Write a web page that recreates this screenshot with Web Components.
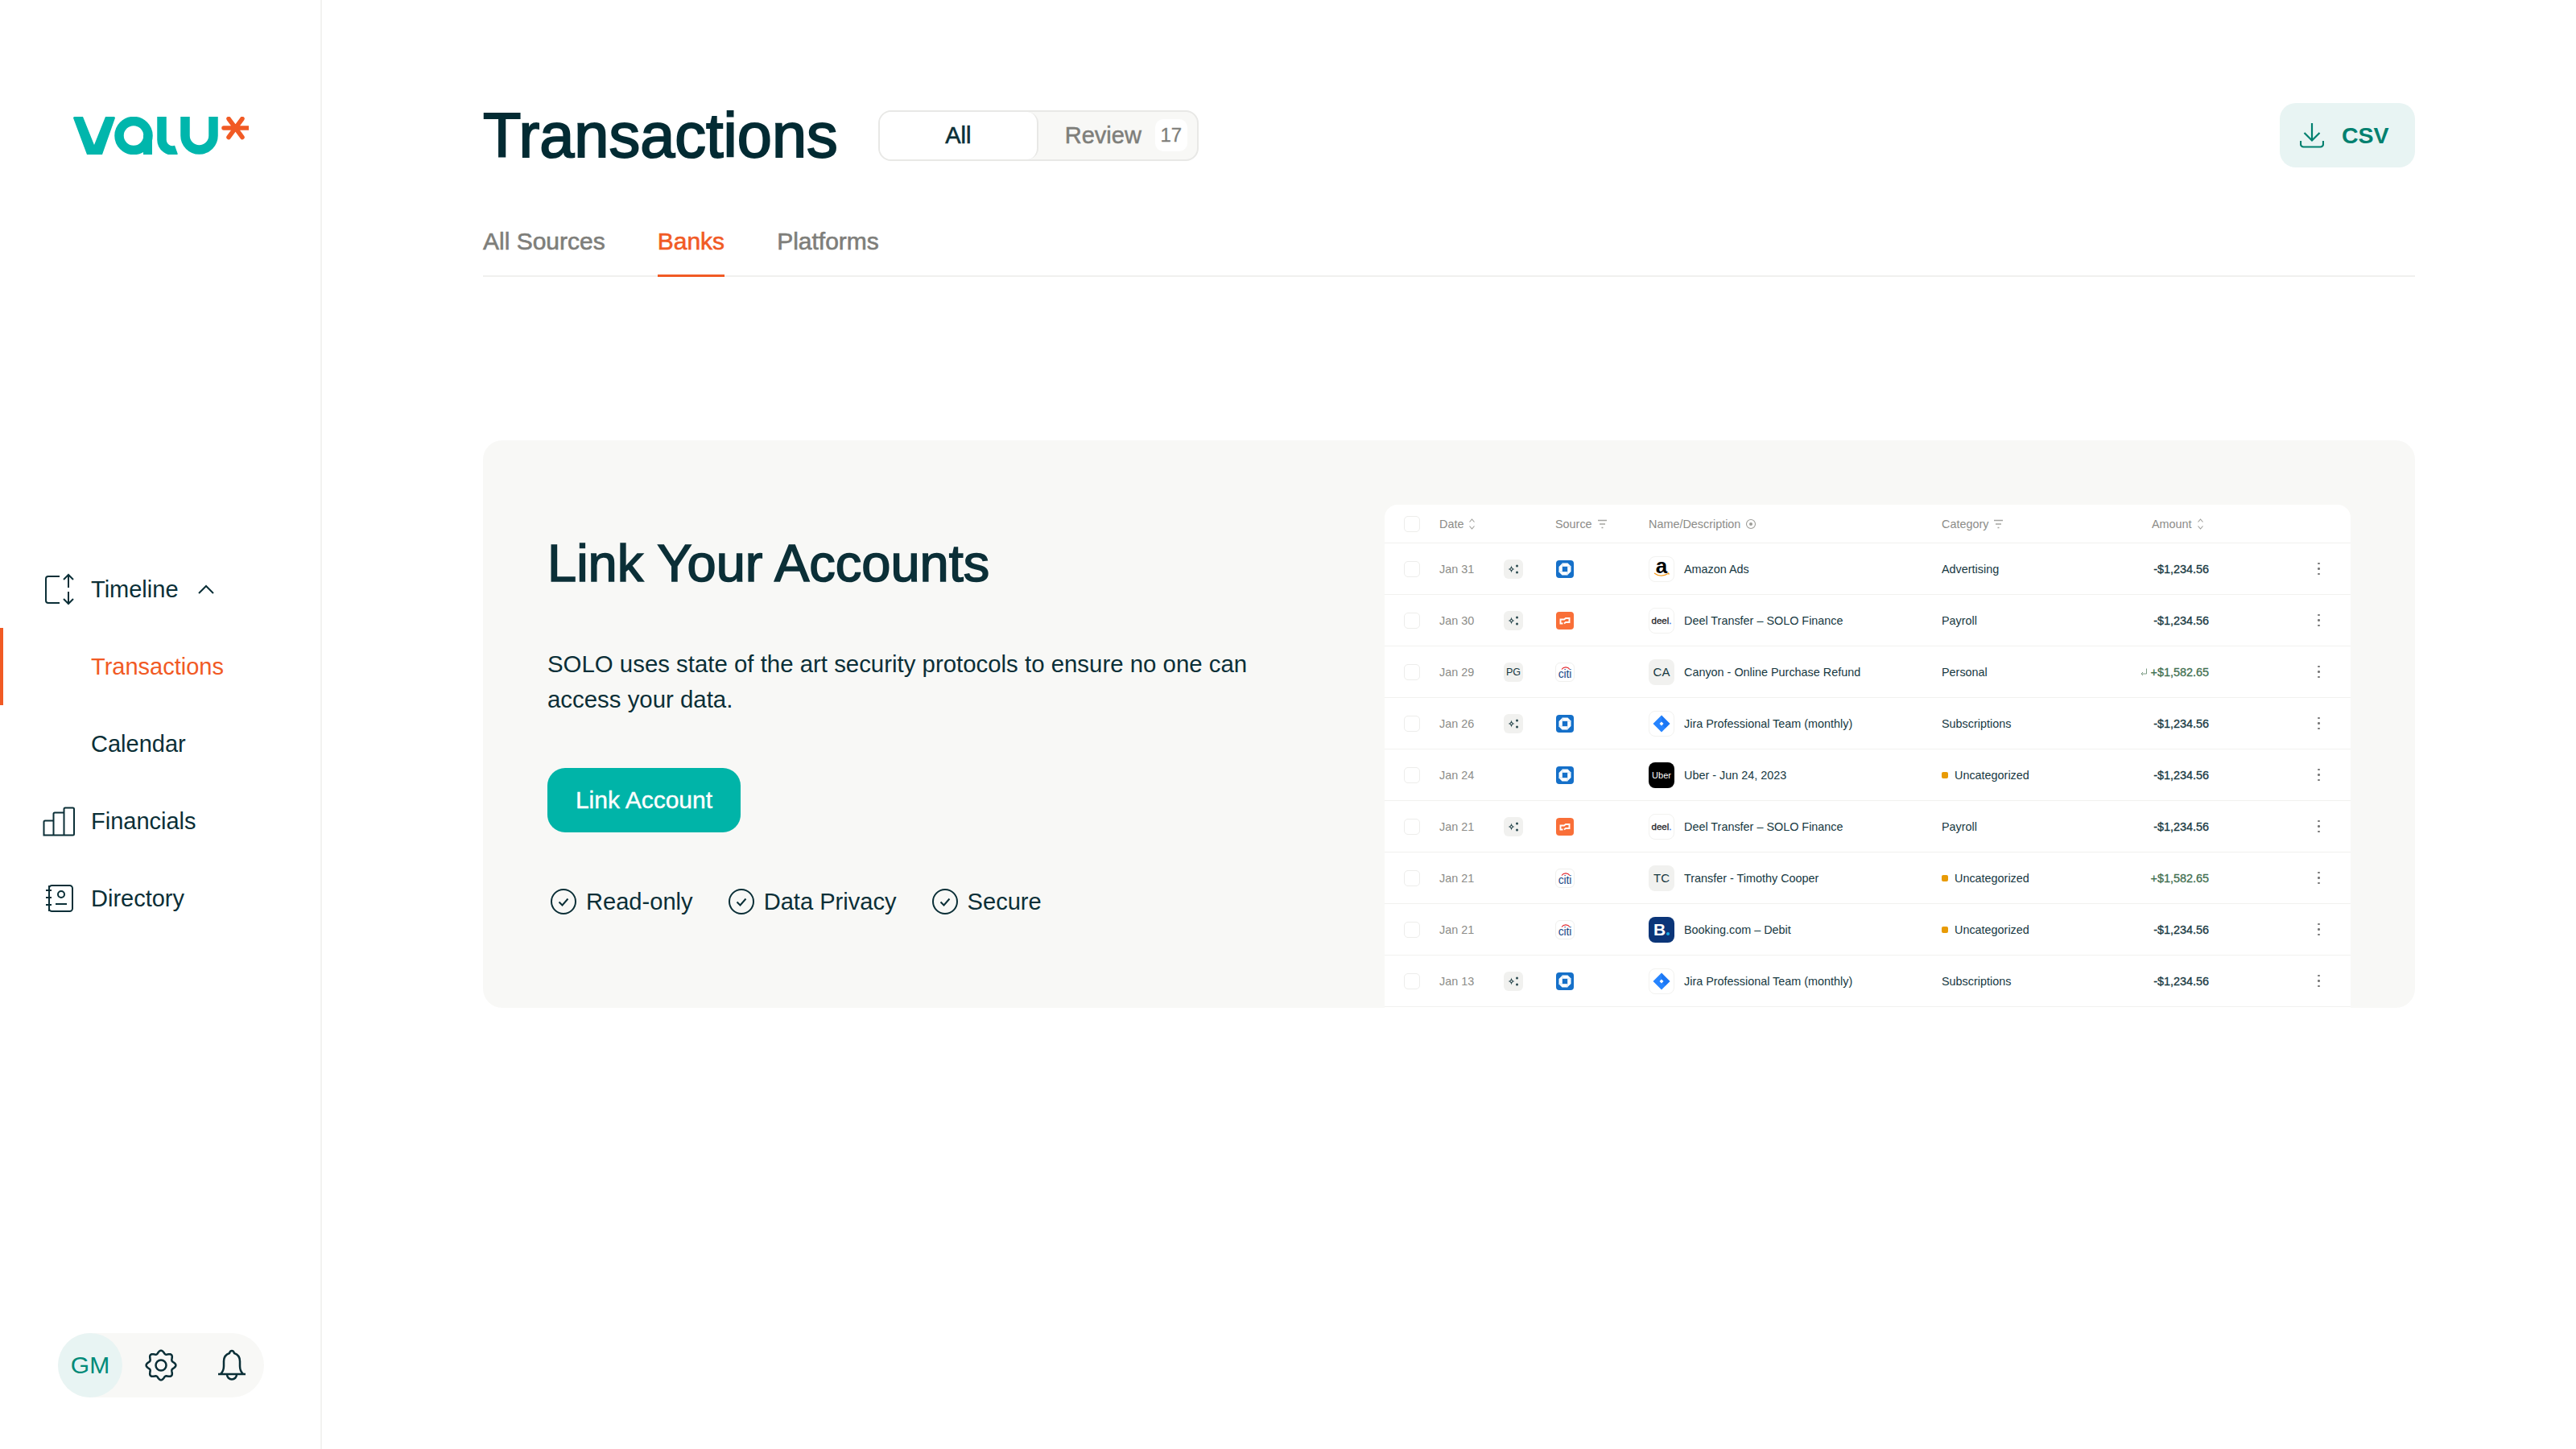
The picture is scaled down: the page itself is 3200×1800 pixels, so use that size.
<!DOCTYPE html>
<html lang="en">
<head>
<meta charset="utf-8">
<title>Transactions</title>
<style>
	html, body { margin: 0; background: #fff; }
	body {
		width: 3200px;
		height: 1800px;
		overflow: hidden;
		display: flex;
		font-family: "Liberation Sans", Arial, sans-serif;
		color: #0b2f37;
	}
</style>
</head>
<body>
<val-sidebar></val-sidebar>
<val-main>
	<val-page-header></val-page-header>
	<val-tabs></val-tabs>
	<val-link-card>
		<val-txn-table slot="preview"></val-txn-table>
	</val-link-card>
</val-main>

<script>
// icons
const navIcons = {
	timeline: `<path d="M22 4H8a3 3 0 0 0-3 3v27a3 3 0 0 0 3 3h14"/><path d="M33 2v16M27 8l6-6 6 6M33 23v15M27 32l6 6 6-6"/>`,
	financials: `<path d="M2.500 37.500V21a1.500 1.500 0 0 1 1.500-1.500H14.500V37.500ZM14.500 37.500V11a1.500 1.500 0 0 1 1.500-1.500H27.500V37.500ZM27.500 37.500V5a1.500 1.500 0 0 1 1.500-1.500H38.500A1.500 1.500 0 0 1 40 5V36a1.500 1.500 0 0 1-1.500 1.500H2.500"/>`,
	directory: `<rect x="9" y="4" width="29" height="32" rx="3.500"/><circle cx="24" cy="15" r="4"/><path d="M17 27h14M5 10h7M5 19h7M5 28h7M9 4v32"/>`
};

const sparkle = `<svg width="24" height="24" viewBox="0 0 24 24"><path fill="#2b4a50" d="M9.500 7.500c.5 2.500 1.500 4 4 4.500-2.500.5-3.500 2-4 4.500-.5-2.500-1.500-4-4-4.500 2.500-.5 3.500-2 4-4.500Z"/><circle cx="9.500" cy="12" r="1" fill="#f1f1ef"/><circle cx="16.500" cy="8" r="1.500" fill="#2b4a50"/><circle cx="16.500" cy="16" r="1.500" fill="#2b4a50"/></svg>`;

const sources = {
	chase: `<svg width="24" height="24" viewBox="0 0 24 24"><rect x="1" y="1" width="22" height="22" rx="4" fill="#1570c9"/><path fill="#fff" d="M9 4.500h6.500l4 4V15l-4.500 4.500H8.500l-4-4V9Z"/><rect x="8.800" y="8.800" width="6.400" height="6.400" fill="#1570c9"/><path stroke="#b7d6f1" stroke-width=".8" d="M9 4.500v4.300M19.500 9h-4.300M15 19.500v-4.300M4.500 15h4.300"/></svg>`,
	brex: `<svg width="24" height="24" viewBox="0 0 24 24"><rect x="1" y="1" width="22" height="22" rx="4" fill="#f96f38"/><path fill="none" stroke="#fff" stroke-width="1.900" d="M9.500 15.500H6.500v-5H11l2-1.500h4.500v5H13l-2 1.500"/></svg>`,
	citi: `<span class="citi"><svg width="14" height="5" viewBox="0 0 14 5"><path d="M3 4.500C5.500 1 10.500 1 13 4.500" fill="none" stroke="#e2282e" stroke-width="1.200"/></svg><b>citi</b></span>`
};

const logos = {
	amazon: `<span class="logo white amazon"><b>a</b><svg width="22" height="6" viewBox="0 0 22 6"><path d="M2 1c5 4 12 4 17 .500M19 .500l1.500 2" fill="none" stroke="#f79c1c" stroke-width="1.300"/></svg></span>`,
	deel: `<span class="logo white deel"><b>deel<i>.</i></b></span>`,
	jira: `<span class="logo white"><svg width="24" height="24" viewBox="0 0 24 24"><path fill="#2684ff" d="M12 1.500L22.500 12 12 22.500 1.500 12Z"/><path fill="#0b5fe0" d="M12 1.500L22.500 12 17 17.500 12 12Z" opacity=".35"/><path fill="#fff" d="M12 9.500l2.500 2.500-2.500 2.500L9.500 12Z"/></svg></span>`,
	uber: `<span class="logo uber">Uber</span>`,
	booking: `<span class="logo booking"><b>B</b><i></i></span>`,
	CA: `<span class="logo grey">CA</span>`,
	TC: `<span class="logo grey">TC</span>`
};

const filterIcon = `<svg width="13" height="14" viewBox="0 0 13 14"><path d="M1 2.500h11M3 7h7M5.500 11.500h2" stroke="#a5a5a1" stroke-width="1.300" fill="none"/></svg>`;
const sortIcon = `<svg width="9" height="16" viewBox="0 0 9 16"><path d="M1.500 5.500L4.500 2l3 3.500M1.500 10.500l3 3.500 3-3.500" stroke="#9d9d99" stroke-width="1.100" fill="none"/></svg>`;
const eyeIcon = `<svg width="14" height="14" viewBox="0 0 14 14"><circle cx="7" cy="7" r="5.500" stroke="#9d9d99" stroke-width="1.100" fill="none"/><circle cx="7" cy="7" r="2" fill="#9d9d99"/></svg>`;
const checkCircle = `<svg width="32" height="32" viewBox="0 0 32 32"><circle cx="16" cy="16" r="15" fill="none" stroke="#0b2f37" stroke-width="2"/><path d="M10.500 16.500l4 4 7-8" fill="none" stroke="#0b2f37" stroke-width="2"/></svg>`;

function gearPath() {
	let d = '';
	for (let i = 0; i <= 96; i++) {
		const a = (i / 96) * Math.PI * 2;
		const r = 16.5 + 1.9 * Math.cos(8 * a);
		d += (i ? 'L' : 'M') + (20 + r * Math.sin(a)).toFixed(2) + ' ' + (20 - r * Math.cos(a)).toFixed(2);
	}
	return d + 'Z';
}

class ValLogo extends HTMLElement {
	constructor() {
		super();
		this.attachShadow({ mode: 'open' });
		this.shadowRoot.innerHTML = `
			<style>:host { display: block; width: 218px; height: 47px; } svg { display: block; }</style>
			<svg width="218" height="47" viewBox="0 0 218 47">
				<g fill="#00b6ac">
					<path d="M0 1.500Q0 0 1.500 0H12L26 35 40 0h10.500Q52 0 52 1.500L36 47H17Z"/>
					<rect x="87" y="23" width="11" height="24"/>
				</g>
				<g fill="none" stroke="#00b6ac" stroke-width="11.500">
					<circle cx="75" cy="23.500" r="18"/>
					<path d="M110 0V28A13.500 13.500 0 0 0 128 41.200"/>
					<path d="M139 0V23.500A17.500 17.500 0 0 0 174 23.500V0"/>
				</g>
				<path d="M187 14h31M193 2.500l17 23M210 2.500l-17 23" stroke="#f15a24" stroke-width="5.500" stroke-linecap="round" fill="none"/>
			</svg>`;
	}
}

class ValNavItem extends HTMLElement {
	constructor() {
		super();
		this.attachShadow({ mode: 'open' });
		const icon = navIcons[this.getAttribute('icon')];
		this.shadowRoot.innerHTML = `
			<style>
				:host {
					display: flex;
					align-items: center;
					height: 96px;
					box-sizing: border-box;
					padding-left: 52px;
					gap: 21px;
					font-size: 29px;
					color: #0b2f37;
				}
				:host([active]) {
					color: #f15a24;
					box-shadow: inset 4px 0 0 #f15a24;
				}
				.ico { width: 40px; height: 40px; flex: none; }
				svg { display: block; fill: none; stroke: #0b2f37; stroke-width: 2; overflow: visible; }
				.chev { margin-left: 3px; }
			</style>
			<span class="ico">${icon ? `<svg width="40" height="40" viewBox="0 0 40 40">${icon}</svg>` : ''}</span>
			<slot></slot>
			${this.hasAttribute('open') ? `<svg class="chev" width="20" height="12" viewBox="0 0 20 12"><path d="M1 11l9-9 9 9"/></svg>` : ''}`;
	}
}

class ValUserBar extends HTMLElement {
	constructor() {
		super();
		this.attachShadow({ mode: 'open' });
		this.shadowRoot.innerHTML = `
			<style>
				:host {
					display: flex;
					align-items: center;
					width: 256px;
					height: 80px;
					border-radius: 40px;
					background: #f8f8f6;
				}
				.avatar {
					width: 80px;
					height: 80px;
					border-radius: 50%;
					background: #e8f4f3;
					color: #008a78;
					font-size: 30px;
					display: flex;
					align-items: center;
					justify-content: center;
				}
				svg { display: block; fill: none; stroke: #0b2f37; stroke-width: 2.500; }
				.gear { margin-left: 28px; }
				.bell { margin-left: 48px; }
			</style>
			<div class="avatar">GM</div>
			<svg class="gear" width="40" height="40" viewBox="0 0 40 40"><path stroke-linejoin="round" d="${gearPath()}"/><circle cx="20" cy="20" r="6.500"/></svg>
			<svg class="bell" width="40" height="44" viewBox="0 0 40 44"><path d="M3 33h34M6 33c3-3 4-6 4-10v-6c0-6 4-9 7-10 .5-2 1.500-3 3-3s2.500 1 3 3c3 1 7 4 7 10v6c0 4 1 7 4 10"/><path d="M14 33.500a6 6 0 0 0 12 0"/></svg>`;
	}
}

class ValSidebar extends HTMLElement {
	constructor() {
		super();
		this.attachShadow({ mode: 'open' });
		this.shadowRoot.innerHTML = `
			<style>
				:host {
					display: flex;
					flex-direction: column;
					flex: none;
					width: 400px;
					height: 1800px;
					box-sizing: border-box;
					border-right: 2px solid #f2f2f0;
					padding: 145px 0 64px;
				}
				val-logo { margin-left: 91px; }
				nav { margin-top: 492px; }
				val-user-bar { margin: auto 0 0 72px; }
			</style>
			<val-logo></val-logo>
			<nav>
				<val-nav-item icon="timeline" open>Timeline</val-nav-item>
				<val-nav-item active>Transactions</val-nav-item>
				<val-nav-item>Calendar</val-nav-item>
				<val-nav-item icon="financials">Financials</val-nav-item>
				<val-nav-item icon="directory">Directory</val-nav-item>
			</nav>
			<val-user-bar></val-user-bar>`;
	}
}

class ValMain extends HTMLElement {
	constructor() {
		super();
		this.attachShadow({ mode: 'open' });
		this.shadowRoot.innerHTML = `
			<style>
				:host {
					display: block;
					flex: 1;
					min-width: 0;
					padding: 128px 200px 0 200px;
				}
			</style>
			<slot></slot>`;
	}
}

class ValPageHeader extends HTMLElement {
	constructor() {
		super();
		this.attachShadow({ mode: 'open' });
		this.shadowRoot.innerHTML = `
			<style>
				:host { display: flex; align-items: center; height: 80px; }
				h1 {
					margin: 0;
					font-size: 77.500px;
					font-weight: 400;
					-webkit-text-stroke: 2px #032b33;
					color: #032b33;
					line-height: 80px;
				}
				.toggle {
					display: flex;
					align-items: center;
					box-sizing: border-box;
					width: 398px;
					height: 63px;
					margin-left: 50px;
					background: #f8f8f6;
					border: 2px solid #e8e8e6;
					border-radius: 16px;
					font-size: 29px;
				}
				.all {
					width: 197px;
					height: 59px;
					box-sizing: border-box;
					background: #fff;
					border-right: 2px solid #e8e8e6;
					border-radius: 14px;
					display: flex;
					align-items: center;
					justify-content: center;
					-webkit-text-stroke: .6px;
					flex: none;
				}
				.review { margin-left: 33px; color: #7e7e7a; -webkit-text-stroke: .5px; }
				.badge {
					width: 40px;
					height: 40px;
					margin-left: 17px;
					border-radius: 10px;
					background: #fff;
					color: #7e7e7a;
					font-size: 24px;
					-webkit-text-stroke: .3px;
					display: flex;
					align-items: center;
					justify-content: center;
				}
				.csv {
					margin-left: auto;
					display: flex;
					align-items: center;
					box-sizing: border-box;
					width: 168px;
					height: 80px;
					padding-left: 25px;
					border-radius: 20px;
					background: #e8f4f3;
					color: #00806f;
					font-size: 28.500px;
					font-weight: 700;
					gap: 22px;
				}
				.csv svg { display: block; fill: none; stroke: #00806f; stroke-width: 2.200; }
			</style>
			<h1>Transactions</h1>
			<div class="toggle">
				<div class="all">All</div>
				<div class="review">Review</div>
				<div class="badge">17</div>
			</div>
			<div class="csv">
				<svg width="30" height="32" viewBox="0 0 30 32"><path d="M15 1v21M5.500 13l9.500 9.500 9.500-9.500M1 23v4a3.500 3.500 0 0 0 3.500 3.500h21A3.500 3.500 0 0 0 29 27v-4"/></svg>
				<span>CSV</span>
			</div>`;
	}
}

class ValTabs extends HTMLElement {
	constructor() {
		super();
		this.attachShadow({ mode: 'open' });
		this.shadowRoot.innerHTML = `
			<style>
				:host {
					display: flex;
					gap: 65px;
					height: 72px;
					margin-top: 62px;
					border-bottom: 2px solid #f0f0ee;
					font-size: 30px;
					color: #7e7e7a;
					-webkit-text-stroke: .6px;
				}
				div {
					height: 74px;
					box-sizing: border-box;
					padding-top: 13px;
					line-height: 34px;
				}
				.on {
					color: #f15a24;
					border-bottom: 3px solid #f15a24;
				}
			</style>
			<div>All Sources</div>
			<div class="on">Banks</div>
			<div>Platforms</div>`;
	}
}

class ValLinkCard extends HTMLElement {
	constructor() {
		super();
		this.attachShadow({ mode: 'open' });
		this.shadowRoot.innerHTML = `
			<style>
				:host {
					display: flex;
					justify-content: space-between;
					height: 705px;
					margin-top: 203px;
					padding: 0 80px;
					background: #f8f8f6;
					border-radius: 24px;
					overflow: hidden;
				}
				.copy { width: 900px; }
				h2 {
					margin: 111px 0 0;
					font-size: 65px;
					line-height: 84px;
					font-weight: 400;
					-webkit-text-stroke: 1.600px;
				}
				p {
					margin: 61px 0 0;
					font-size: 29.400px;
					line-height: 44px;
				}
				.btn {
					width: 240px;
					height: 80px;
					margin-top: 63px;
					border-radius: 22px;
					background: #00b4a8;
					color: #fff;
					font-size: 30px;
					-webkit-text-stroke: .4px;
					display: flex;
					align-items: center;
					justify-content: center;
				}
				.checks {
					display: flex;
					gap: 44px;
					margin: 66px 0 0 4px;
					font-size: 29.100px;
				}
				.checks span { display: flex; align-items: center; gap: 12px; height: 40px; }
				svg { display: block; flex: none; }
				::slotted(*) { margin-top: 80px; }
			</style>
			<div class="copy">
				<h2>Link Your Accounts</h2>
				<p>SOLO uses state of the art security protocols to ensure no one can access your data.</p>
				<div class="btn">Link Account</div>
				<div class="checks">
					<span>${checkCircle}Read-only</span>
					<span>${checkCircle}Data Privacy</span>
					<span>${checkCircle}Secure</span>
				</div>
			</div>
			<slot name="preview"></slot>`;
	}
}

const rows = [
	['Jan 31', 'spark', 'chase', 'amazon', 'Amazon Ads', 'Advertising', '-$1,234.56'],
	['Jan 30', 'spark', 'brex', 'deel', 'Deel Transfer – SOLO Finance', 'Payroll', '-$1,234.56'],
	['Jan 29', 'PG', 'citi', 'CA', 'Canyon - Online Purchase Refund', 'Personal', '+$1,582.65', true],
	['Jan 26', 'spark', 'chase', 'jira', 'Jira Professional Team (monthly)', 'Subscriptions', '-$1,234.56'],
	['Jan 24', '', 'chase', 'uber', 'Uber - Jun 24, 2023', '!Uncategorized', '-$1,234.56'],
	['Jan 21', 'spark', 'brex', 'deel', 'Deel Transfer – SOLO Finance', 'Payroll', '-$1,234.56'],
	['Jan 21', '', 'citi', 'TC', 'Transfer - Timothy Cooper', '!Uncategorized', '+$1,582.65'],
	['Jan 21', '', 'citi', 'booking', 'Booking.com – Debit', '!Uncategorized', '-$1,234.56'],
	['Jan 13', 'spark', 'chase', 'jira', 'Jira Professional Team (monthly)', 'Subscriptions', '-$1,234.56']
];

class ValTxnTable extends HTMLElement {
	constructor() {
		super();
		this.attachShadow({ mode: 'open' });
		const body = rows.map(([date, chip, source, logo, name, category, amount, refund]) => `
			<div class="row">
				<span class="box"></span>
				<span class="date">${date}</span>
				<span>${chip ? `<span class="chip">${chip === 'spark' ? sparkle : chip}</span>` : ''}</span>
				<span class="src">${sources[source]}</span>
				<span class="name">${logos[logo]}${name}</span>
				<span class="cat">${category[0] === '!' ? `<i class="flag"></i>${category.slice(1)}` : category}</span>
				<span class="amt ${amount[0] === '+' ? 'plus' : ''}">${refund ? `<svg width="10" height="12" viewBox="0 0 10 12"><path d="M8.500 1.500V8H2M4 6L2 8l2 2" fill="none" stroke="#7d9c85" stroke-width="1"/></svg>` : ''}${amount}</span>
				<span class="more"><i></i><i></i><i></i></span>
			</div>`).join('');
		this.shadowRoot.innerHTML = `
			<style>
				:host {
					display: block;
					flex: none;
					width: 1200px;
					height: 625px;
					background: #fff;
					border-radius: 16px 16px 0 0;
					font-size: 14.400px;
					color: #16383f;
				}
				.row, .head {
					display: grid;
					grid-template-columns: 44px 80px 64px 116px 364px 200px 132px 1fr;
					align-items: center;
					padding-left: 24px;
					border-bottom: 1.500px solid #f1f1ef;
				}
				.row { height: 64px; box-sizing: border-box; }
				.head { height: 48px; box-sizing: border-box; color: #8c8c88; }
				.head span { display: flex; align-items: center; gap: 6px; }
				.box {
					width: 20px;
					height: 20px;
					box-sizing: border-box;
					border: 1.500px solid #ededeb;
					border-radius: 5px;
				}
				.date { color: #8c8c88; }
				.chip {
					width: 24px;
					height: 24px;
					border-radius: 6px;
					background: #f1f1ef;
					display: flex;
					align-items: center;
					justify-content: center;
					font-size: 12.500px;
				}
				svg { display: block; flex: none; }
				.src { display: block; }
				.citi {
					width: 24px;
					height: 24px;
					box-sizing: border-box;
					border: 1px solid #f0f0ee;
					border-radius: 6px;
					display: flex;
					flex-direction: column;
					align-items: center;
					padding-top: 3px;
					overflow: hidden;
				}
				.citi svg { margin-bottom: -2px; }
				.citi b { display: block; font-size: 14px; line-height: 14px; font-weight: 400; color: #1b4b87; letter-spacing: -.1px; }
				.name { display: flex; align-items: center; gap: 12px; white-space: nowrap; }
				.logo {
					width: 32px;
					height: 32px;
					box-sizing: border-box;
					border-radius: 8px;
					display: flex;
					flex-direction: column;
					align-items: center;
					justify-content: center;
					flex: none;
				}
				.white { border: 1px solid #f2f2f0; background: #fff; }
				.grey { background: #f1f1ef; font-size: 15px; }
				.amazon { color: #000; line-height: 18px; }
				.amazon b { font-size: 26px; margin-top: -3px; }
				.amazon svg { margin-top: -1px; }
				.deel b { font-size: 11.500px; font-weight: 400; color: #1f2328; -webkit-text-stroke: .3px; }
				.deel i { font-style: normal; color: #2f6fed; }
				.uber { background: #000; color: #fff; font-size: 11px; }
				.booking { background: #0b3578; color: #fff; flex-direction: row; gap: 1px; align-items: baseline; padding-top: 4px; }
				.booking b { font-size: 21px; line-height: 24px; }
				.booking i { width: 4px; height: 4px; border-radius: 50%; background: #18a9e6; }
				.cat { display: flex; align-items: center; gap: 8px; }
				.flag { width: 8px; height: 8px; border-radius: 2px; background: #e89b06; }
				.amt {
					display: flex;
					justify-content: flex-end;
					align-items: center;
					gap: 4px;
					-webkit-text-stroke: .3px;
				}
				.plus { color: #3f6f4f; }
				.more { display: flex; flex-direction: column; gap: 4px; margin-left: 135px; width: 3px; }
				.more i { width: 2.500px; height: 2.500px; border-radius: 50%; background: #777; }
				.head .amt-h { margin-left: 61px; }
			</style>
			<div class="head">
				<span class="box"></span>
				<span>Date ${sortIcon}</span>
				<span></span>
				<span>Source ${filterIcon}</span>
				<span>Name/Description ${eyeIcon}</span>
				<span>Category ${filterIcon}</span>
				<span class="amt-h">Amount ${sortIcon}</span>
				<span></span>
			</div>
			${body}`;
	}
}

customElements.define('val-logo', ValLogo);
customElements.define('val-nav-item', ValNavItem);
customElements.define('val-user-bar', ValUserBar);
customElements.define('val-sidebar', ValSidebar);
customElements.define('val-main', ValMain);
customElements.define('val-page-header', ValPageHeader);
customElements.define('val-tabs', ValTabs);
customElements.define('val-link-card', ValLinkCard);
customElements.define('val-txn-table', ValTxnTable);
</script>
</body>
</html>
